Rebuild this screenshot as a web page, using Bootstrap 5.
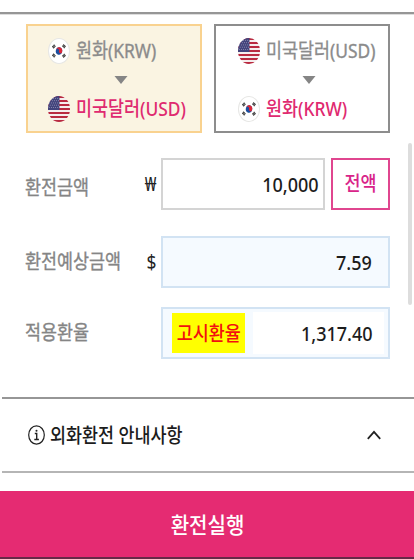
<!DOCTYPE html>
<html lang="ko">
<head>
<meta charset="utf-8">
<meta name="viewport" content="width=device-width, initial-scale=1">
<title>외화환전</title>
<link href="https://cdn.jsdelivr.net/npm/bootstrap@5.3.0/dist/css/bootstrap.min.css" rel="stylesheet">
<style>
  body { font-family: "Noto Sans", "Noto Sans CJK KR", sans-serif; font-size: 20px; line-height: 26px; color: #222; overflow: hidden; }
  .screen { height: 559px; }
  .topline { height: 15px; border-bottom: 1px solid #ddd; }
  .topline::after { content: ""; display: block; height: 2px; margin-top: 12px; background: #969696; }
  .topline { overflow: hidden; padding-top: 12px; }
  .topline::after { margin-top: 0; }
  .main-area { padding: 9px 24px 0 26px; height: 382px; }
  .pair { width: 176px; height: 109px; border: 2px solid #8d8d8d; padding: 11px 0 0 20px; background: #fff; }
  .pair.chosen { border-color: #f9d28f; background: #faf4e2; }
  .pair.second { padding-left: 22px; }
  .pair-line { height: 28px; }
  .flag { width: 22px; height: 26px; flex: none; margin-right: 6px; }
  .arrow { height: 30px; padding-left: 66px; }
  .second .arrow { padding-left: 64px; }
  .arrow svg { display: block; }
  .muted { color: #8b8b8b; -webkit-text-stroke: .35px #8b8b8b; }
  .pink { color: #df2a70; font-weight: 500; }
  .sq { display: inline-block; white-space: nowrap; transform: scaleX(.87); transform-origin: left center; }
  .sq-end { transform-origin: right center; }
  .sq-mid { transform-origin: center; }
  .line-item { height: 52px; }
  .gap-first { margin-top: 25px; }
  .gap-second { margin-top: 26px; }
  .gap-third { margin-top: 19px; }
  .caption { width: 112px; margin-left: -1px; color: #858585; -webkit-text-stroke: .35px #858585; }
  .gap-first .caption { padding-top: 7px; }
  .unit { width: 24px; padding-right: 5px; }
  .field { height: 52px; border: 2px solid #d4d4d4; }
  .field.tint { border-color: #d2e3f3; background: #f5faff; }
  .figure { font-size: 20px; font-weight: 500; color: #1c1c1c; transform: scaleX(.9); }
  .field .figure { padding-top: 1px; }
  .all-btn { width: 59px; height: 52px; margin-left: 6px; border: 2px solid #e0468f; border-radius: 0; color: #d92489; font-size: 20px; font-weight: 500; background: #fff; }
  .notice-tag { width: 73px; height: 40px; margin-left: 9px; background: #ff0; color: #f21010; font-weight: 500; padding-top: 2px; }
  .rate-box { width: 131px; height: 42px; margin-right: 4px; padding-right: 11px; background: #fff; }
  .info-bar { height: 76px; border-top: 2px solid #969696; border-bottom: 2px solid #b5b5b5; padding: 0 33px 0 26px; color: #1c1c1c; margin-left: 2px; }
  .info-title { font-weight: 500; margin-left: 5px; padding-top: 1px; }
  .run-btn { height: 66px; margin-top: 18px; border-radius: 0; background: #e52b72; color: #fff; font-size: 22px; font-weight: 500; border: 0; }
  .run-btn .sq { transform: scaleX(.91); }
  .endline { height: 2px; background: #682947; }
  .thumb { left: 408px; top: 143px; width: 4px; height: 162px; border-radius: 2px; background: #ddd; }
</style>
<script src="https://cdn.jsdelivr.net/npm/bootstrap@5.3.0/dist/js/bootstrap.bundle.min.js"></script>
</head>
<body class="bg-white">
<svg width="0" height="0" class="position-absolute">
  <defs>
    <clipPath id="round"><circle cx="12" cy="12" r="12"/></clipPath>
    <symbol id="kr" viewBox="0 0 24 24" preserveAspectRatio="none">
      <circle cx="12" cy="12" r="11.5" fill="#fff" stroke="#e6e6e4"/>
      <g transform="rotate(15 12 12)"><circle cx="12" cy="12" r="3.5" fill="#1c4f9f"/>
      <path d="M8.5 12a3.5 3.5 0 0 1 7 0a1.75 1.75 0 0 1-3.5 0a1.75 1.75 0 0 0-3.5 0z" fill="#dc2637"/></g>
      <g stroke="#333" stroke-width="2.8" stroke-dasharray=".9 .25">
        <path d="M5.2 8.8L7.8 6.6M16.2 6.6L18.8 8.8M5.2 15.2L7.8 17.4M16.2 17.4L18.8 15.2"/>
      </g>
    </symbol>
    <symbol id="us" viewBox="0 0 24 24" preserveAspectRatio="none">
      <g clip-path="url(#round)">
        <path fill="#f5eeee" d="M0 0h24v24H0z"/>
        <path stroke="#b92a40" stroke-width="1.85" d="M0 .9h24M0 4.6h24M0 8.3h24M0 12h24M0 15.7h24M0 19.4h24M0 23.1h24"/>
        <path fill="#42447c" d="M0 0h12.5v12.9H0z"/>
        <path stroke="#b6b5ce" stroke-width=".8" stroke-dasharray=".8 1.5" d="M1 2.2h11M2 4.3h10M1 6.4h11M2 8.5h10M1 10.6h11"/>
      </g>
    </symbol>
  </defs>
</svg>
<div class="screen d-flex flex-column">
  <div class="topline"></div>
  <main class="main-area">
    <div class="d-flex justify-content-between">
      <div class="pair chosen">
        <div class="pair-line d-flex align-items-center"><svg class="flag"><use href="#kr"/></svg><span class="sq muted">원화(KRW)</span></div>
        <div class="arrow d-flex align-items-center"><svg width="14" height="8"><path d="M.5 0h13L7 8z" fill="#858585"/></svg></div>
        <div class="pair-line d-flex align-items-center"><svg class="flag"><use href="#us"/></svg><span class="sq pink">미국달러(USD)</span></div>
      </div>
      <div class="pair second">
        <div class="pair-line d-flex align-items-center"><svg class="flag"><use href="#us"/></svg><span class="sq muted">미국달러(USD)</span></div>
        <div class="arrow d-flex align-items-center"><svg width="14" height="8"><path d="M.5 0h13L7 8z" fill="#858585"/></svg></div>
        <div class="pair-line d-flex align-items-center"><svg class="flag"><use href="#kr"/></svg><span class="sq pink">원화(KRW)</span></div>
      </div>
    </div>
    <div class="line-item gap-first d-flex align-items-center">
      <div class="caption"><span class="sq">환전금액</span></div>
      <div class="unit d-flex justify-content-end"><span class="sq sq-end">₩</span></div>
      <div class="field flex-grow-1 d-flex align-items-center justify-content-end pe-1"><span class="figure sq-end sq m-0">10,000</span></div>
      <button class="all-btn btn p-0"><span class="sq sq-mid">전액</span></button>
    </div>
    <div class="line-item gap-second d-flex align-items-center">
      <div class="caption"><span class="sq">환전예상금액</span></div>
      <div class="unit d-flex justify-content-end"><span class="sq sq-end">$</span></div>
      <div class="field tint flex-grow-1 d-flex align-items-center justify-content-end pe-3"><span class="figure sq-end sq m-0">7.59</span></div>
    </div>
    <div class="line-item gap-third d-flex align-items-center">
      <div class="caption"><span class="sq">적용환율</span></div>
      <div class="unit"></div>
      <div class="field tint flex-grow-1 d-flex align-items-center justify-content-between">
        <div class="notice-tag d-flex align-items-center justify-content-center"><span class="sq sq-mid">고시환율</span></div>
        <div class="rate-box d-flex align-items-center justify-content-end"><span class="figure sq-end sq m-0">1,317.40</span></div>
      </div>
    </div>
  </main>
  <div class="info-bar d-flex align-items-center justify-content-between">
    <div class="d-flex align-items-center">
      <svg width="17" height="20" viewBox="0 0 17 20" fill="none" stroke="#222"><ellipse cx="8.5" cy="10" rx="7.8" ry="9.2" stroke-width="1.2"/><path d="M6.8 8.5h1.9v6M6.3 14.5h4.6" stroke-width="1.4"/><circle cx="8.5" cy="5.8" r="1" fill="#222" stroke="none"/></svg>
      <span class="sq info-title">외화환전 안내사항</span>
    </div>
    <svg width="14" height="10" viewBox="0 0 14 10" fill="none" stroke="#222" stroke-width="1.8"><path d="M.8 8.8L7 1.8l6.2 7"/></svg>
  </div>
  <button class="run-btn btn p-0"><span class="sq sq-mid">환전실행</span></button>
  <div class="endline"></div>
</div>
<div class="thumb position-absolute"></div>
</body>
</html>
